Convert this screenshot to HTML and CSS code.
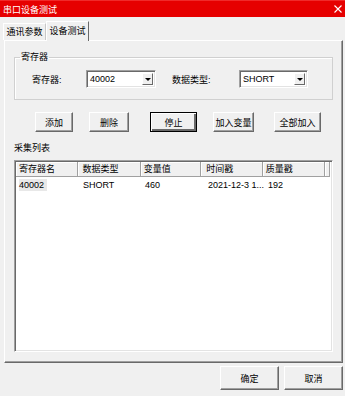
FILE: index.html
```html
<!DOCTYPE html>
<html lang="zh-CN">
<head>
    <meta charset="UTF-8">
    <title>串口设备测试</title>
    <link rel="stylesheet" href="styles.css">
</head>
<body>
    <div class="window">
        <div class="titlebar">
            <span class="title">串口设备测试</span>
            <svg class="close" width="8" height="8" viewBox="0 0 8 8">
                <path d="M0.5 0.5 L7.5 7.5 M7.5 0.5 L0.5 7.5" stroke="#fff" stroke-width="1.1" fill="none"/>
            </svg>
        </div>

        <div class="tabs">
            <div class="tab tab-comm">通讯参数</div>
            <div class="tab tab-test active">设备测试</div>
        </div>

        <div class="panel">
            <fieldset class="group">
                <legend>寄存器</legend>
                <div class="group-row">
                    <span class="lbl lbl-reg">寄存器:</span>
                    <div class="combo combo-reg"><span class="combo-text">40002</span><span class="combo-btn"><i class="arrow"></i></span></div>
                    <span class="lbl lbl-type">数据类型:</span>
                    <div class="combo combo-type"><span class="combo-text">SHORT</span><span class="combo-btn"><i class="arrow"></i></span></div>
                </div>
            </fieldset>

            <div class="btn-row">
                <button class="btn b-add">添加</button>
                <button class="btn b-del">删除</button>
                <button class="btn b-stop default">停止</button>
                <button class="btn b-var">加入变量</button>
                <button class="btn b-all">全部加入</button>
            </div>

            <div class="list-label">采集列表</div>

            <div class="list">
                <div class="list-head">
                    <div class="hcell c1">寄存器名</div>
                    <div class="hcell c2">数据类型</div>
                    <div class="hcell c3">变量值</div>
                    <div class="hcell c4">时间戳</div>
                    <div class="hcell c5">质量戳</div>
                    <div class="hcell c6"></div>
                </div>
                <div class="list-row">
                    <div class="cell c1"><span class="sel">40002</span></div>
                    <div class="cell c2">SHORT</div>
                    <div class="cell c3">460</div>
                    <div class="cell c4">2021-12-3 1...</div>
                    <div class="cell c5">192</div>
                </div>
            </div>
        </div>

        <div class="footer">
            <button class="btn b-ok">确定</button>
            <button class="btn b-cancel">取消</button>
        </div>
    </div>
</body>
</html>
```

FILE: styles.css
```css
* {
    box-sizing: border-box;
}
html, body {
    margin: 0;
    padding: 0;
}
body {
    width: 345px;
    height: 396px;
    overflow: hidden;
    background: #f0f0f0;
    font-family: "Liberation Sans", "Noto Sans CJK SC", sans-serif;
    font-size: 9px;
    color: #000;
}
.window {
    height: 396px;
    display: flex;
    flex-direction: column;
}

/* title bar */
.titlebar {
    height: 17px;
    background: #e60000;
    border-top: 1px solid #f02a2a;
    display: flex;
    align-items: center;
    justify-content: space-between;
    padding: 0 2px 0 3px;
    color: #fff;
}
.close {
    margin-right: 1px;
}

/* tabs */
.tabs {
    height: 23px;
    display: flex;
    align-items: flex-end;
    padding-left: 3px;
}
.tab {
    height: 17px;
    line-height: 16px;
    text-align: center;
    border: 1px solid;
    border-color: #fff #c8c8c8 transparent #fff;
    border-bottom: none;
}
.tab-comm {
    width: 43px;
}
.tab.active {
    width: 43px;
    height: 20px;
    line-height: 18px;
    margin-bottom: -1px;
    background: #f0f0f0;
    border-right-color: #696969;
    position: relative;
    z-index: 1;
}

/* tab page */
.panel {
    margin-left: 4px;
    width: 339px;
    height: 323px;
    border: 1px solid;
    border-color: #fff #696969 #696969 #fff;
    box-shadow: inset -1px -1px 0 #a0a0a0;
}

.group {
    margin: 10px 0 0 9px;
    width: 319px;
    height: 49px;
    padding: 6px 0 0 17px;
    border: 1px solid #d0d0d0;
    box-shadow: inset 1px 1px 0 #fff;
}
.group legend {
    padding: 0 1px;
    margin-left: -12px;
    line-height: 13px;
}
.group-row {
    display: flex;
    align-items: center;
    height: 18px;
}
.lbl-reg {
    width: 54px;
}
.lbl-type {
    width: 67px;
    margin-left: 16px;
}
.combo {
    height: 18px;
    display: flex;
    background: #fff;
    border: 1px solid;
    border-color: #a0a0a0 #fff #fff #a0a0a0;
    box-shadow: inset 1px 1px 0 #696969, inset -1px -1px 0 #e3e3e3;
    padding: 2px 2px 2px 2px;
}
.combo-reg {
    width: 70px;
}
.combo-type {
    width: 69px;
}
.combo-text {
    flex: 1;
    line-height: 12px;
    padding-left: 1px;
}
.combo-btn {
    width: 11px;
    background: #f0f0f0;
    border: 1px solid;
    border-color: #fff #696969 #696969 #fff;
    display: flex;
    align-items: center;
    justify-content: center;
}
.arrow {
    width: 0;
    height: 0;
    border-left: 3px solid transparent;
    border-right: 3px solid transparent;
    border-top: 3px solid #000;
}

/* buttons */
.btn {
    font: inherit;
    color: #000;
    height: 20px;
    padding: 0;
    background: #f0f0f0;
    border: 1px solid;
    border-color: #fff #696969 #696969 #fff;
    box-shadow: inset -1px -1px 0 #a0a0a0;
}
.btn.default {
    border: 1px solid #000;
    box-shadow: inset 1px 1px 0 #fff, inset -2px -2px 0 #696969, inset -1px -1px 0 #a0a0a0;
}
.btn-row {
    display: flex;
    margin-top: 12px;
}
.b-add {
    margin-left: 30px;
    width: 38px;
}
.b-del {
    margin-left: 16px;
    width: 40px;
}
.b-stop {
    margin-left: 21px;
    width: 47px;
}
.b-var {
    margin-left: 16px;
    width: 41px;
}
.b-all {
    margin-left: 20px;
    width: 47px;
}

.list-label {
    margin: 10px 0 0 9px;
    line-height: 13px;
}

/* list view */
.list {
    margin: 5px 0 0 9px;
    width: 319px;
    height: 192px;
    background: #fff;
    border: 1px solid;
    border-color: #a0a0a0 #fff #fff #a0a0a0;
    box-shadow: inset 1px 1px 0 #696969, inset -1px -1px 0 #e3e3e3;
    padding: 1px 2px 0 1px;
}
.list-head {
    display: flex;
    height: 15px;
}
.hcell {
    background: #f0f0f0;
    border-right: 1px solid #a0a0a0;
    border-bottom: 1px solid #a0a0a0;
    box-shadow: inset 1px 1px 0 #fff;
    line-height: 14px;
    padding-left: 3px;
    white-space: nowrap;
}
.list-row {
    display: flex;
    height: 14px;
    margin-top: 1px;
}
.cell {
    line-height: 14px;
    padding-left: 3px;
    white-space: nowrap;
}
.c1 { width: 63px; }
.c2 { width: 63px; padding-left: 4px; }
.c3 { width: 61px; }
.c4 { width: 62px; padding-left: 5px; }
.c5 { width: 63px; }
.c6 { width: 5px; }
.sel {
    background: #e8e8e8;
    padding: 1px 3px 1px 0;
}

/* footer */
.footer {
    display: flex;
    justify-content: flex-end;
    gap: 5px;
    margin-top: 3px;
    padding-right: 2px;
}
.b-ok,
.b-cancel {
    width: 59px;
    height: 24px;
}
```
